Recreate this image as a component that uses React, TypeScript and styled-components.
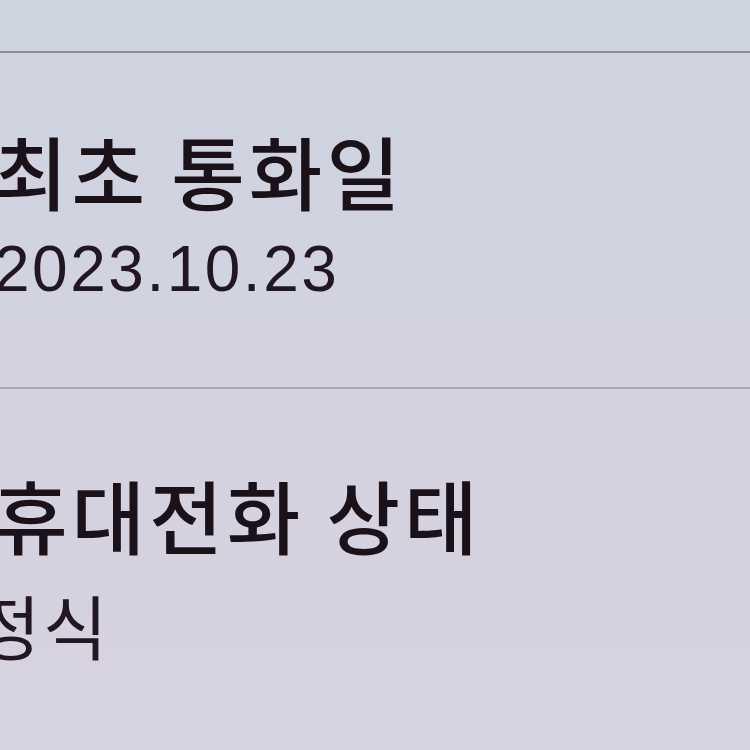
import styled, { createGlobalStyle } from "styled-components";

const GlobalStyle = createGlobalStyle`
  html, body {
    margin: 0;
    padding: 0;
    width: 750px;
    height: 750px;
    overflow: hidden;
  }
  body {
    background: linear-gradient(180deg, #cdd3df 0%, #d3d3e0 45%, #d7d2e0 100%);
    font-family: "Noto Sans CJK KR", "Noto Sans", sans-serif;
    color: #1b1119;
  }
`;

const items = [
  { title: "최초 통화일", value: "2023.10.23", pad: 58, valueSize: 64, valueGap: 0, valueShift: 0 },
  { title: "휴대전화 상태", value: "정식", pad: 66, valueSize: 70, valueGap: 18, valueShift: -18 },
];

const App = () => {
  return (
    <>
      <GlobalStyle />
      <StList>
        <StTopRow />
        {items.map((item) => (
          <StItem key={item.title} $pad={item.pad}>
            <StTitle>{item.title}</StTitle>
            <StValue $size={item.valueSize} $gap={item.valueGap} $shift={item.valueShift}>
              {item.value}
            </StValue>
          </StItem>
        ))}
      </StList>
    </>
  );
};

export default App;

const StList = styled.div`
  display: flex;
  flex-direction: column;
  margin-left: -6px;
  width: 770px;
`;

const StTopRow = styled.div`
  height: 51px;
  border-bottom: 2px solid #8b8f9a;
`;

const StItem = styled.div<{ $pad: number }>`
  display: flex;
  flex-direction: column;
  box-sizing: border-box;
  height: 336px;
  padding-top: ${(p) => p.$pad}px;
  border-bottom: 2px solid #a9a7b5;

  &:last-child {
    height: 361px;
    border-bottom: none;
  }
`;

const StTitle = styled.div`
  font-size: 80px;
  line-height: 116px;
  font-weight: 500;
  letter-spacing: 4px;
`;

const StValue = styled.div<{ $size: number; $gap: number; $shift: number }>`
  margin-top: ${(p) => p.$gap}px;
  margin-left: ${(p) => p.$shift}px;
  font-family: "Liberation Sans", "Noto Sans CJK KR", sans-serif;
  font-size: ${(p) => p.$size}px;
  line-height: 84px;
  font-weight: 400;
  letter-spacing: 2.5px;
  color: #221621;
`;
